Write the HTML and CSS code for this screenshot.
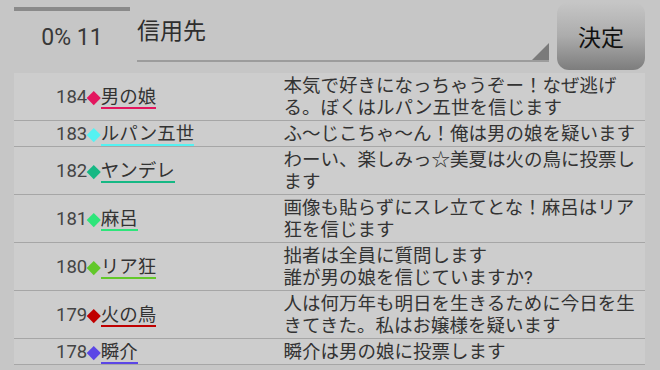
FILE: index.html
```html
<!DOCTYPE HTML>

<html>

<head>
<meta charset="utf-8">
<title>投票</title>

<link rel="stylesheet" href="styles.css">
</head>

<body>
<div id="header">
  <div id="progress">
    <div id="progressBar"></div>
    <div id="progressText">0% 11</div>
  </div>
  <div id="target">
    <span id="targetText">信用先</span>
    <div id="targetArrow"></div>
  </div>
  <button id="decideButton">決定</button>
</div>

<div id="logList">
  <div class="row">
    <div class="who"><span class="num">184</span><span class="mark" style="background:#e3165e"></span><span class="name" style="border-color:#e3165e">男の娘</span></div>
    <div class="msg">本気で好きになっちゃうぞー！なぜ逃げる。ぼくはルパン五世を信じます</div>
  </div>
  <div class="row">
    <div class="who"><span class="num">183</span><span class="mark" style="background:#55f2f2"></span><span class="name" style="border-color:#55f2f2">ルパン五世</span></div>
    <div class="msg">ふ～じこちゃ～ん！俺は男の娘を疑います</div>
  </div>
  <div class="row">
    <div class="who"><span class="num">182</span><span class="mark" style="background:#16b884"></span><span class="name" style="border-color:#16b884">ヤンデレ</span></div>
    <div class="msg">わーい、楽しみっ☆美夏は火の鳥に投票します</div>
  </div>
  <div class="row">
    <div class="who"><span class="num">181</span><span class="mark" style="background:#2ee57a"></span><span class="name" style="border-color:#2ee57a">麻呂</span></div>
    <div class="msg">画像も貼らずにスレ立てとな！麻呂はリア狂を信じます</div>
  </div>
  <div class="row">
    <div class="who"><span class="num">180</span><span class="mark" style="background:#62c82a"></span><span class="name" style="border-color:#62c82a">リア狂</span></div>
    <div class="msg">拙者は全員に質問します<br/>誰が男の娘を信じていますか?</div>
  </div>
  <div class="row">
    <div class="who"><span class="num">179</span><span class="mark" style="background:#c00000"></span><span class="name" style="border-color:#c00000">火の鳥</span></div>
    <div class="msg">人は何万年も明日を生きるために今日を生きてきた。私はお嬢様を疑います</div>
  </div>
  <div class="row">
    <div class="who"><span class="num">178</span><span class="mark" style="background:#5b46e6"></span><span class="name" style="border-color:#5b46e6">瞬介</span></div>
    <div class="msg">瞬介は男の娘に投票します</div>
  </div>
</div>

</body>

</html>
```

FILE: styles.css
```css
body {
  margin: 0;
  background: #c6c6c6;
  color: #333;
  font-family: Roboto, "Noto Sans CJK JP", sans-serif;
  overflow: hidden;
}

#header {
  display: flex;
  height: 73px;
  padding: 0 15px 0 14px;
}

#progress {
  width: 116px;
}

#progressBar {
  margin-top: 7px;
  height: 4px;
  background: #8a8a8a;
}

#progressText {
  text-align: center;
  font-size: 23px;
  line-height: 30px;
  margin-top: 12px;
  color: #383838;
}

#target {
  position: relative;
  flex: 1;
  margin-left: 7px;
  height: 60px;
  border-bottom: 2px solid #9c9c9c;
}

#targetText {
  display: block;
  font-size: 23px;
  line-height: 30px;
  margin-top: 17px;
  color: #2e2e2e;
}

#targetArrow {
  position: absolute;
  right: 0;
  bottom: 0;
  width: 0;
  height: 0;
  border-left: 17px solid transparent;
  border-bottom: 17px solid #7a7a7a;
}

#decideButton {
  width: 88px;
  height: 68px;
  margin: 2px 0 0 8px;
  border: none;
  border-radius: 12px;
  background: linear-gradient(to bottom, #c6c6c6 0%, #acacac 50%, #7d7d7d 100%);
  color: #111;
  font-family: "Noto Sans CJK JP", sans-serif;
  font-size: 23px;
  padding: 0;
}

#logList {
  margin: 0 15px 0 14px;
  background: #cdcdcd;
}

.row {
  display: flex;
  border-bottom: 1px solid #a6a6a6;
}

.who {
  width: 228px;
  padding-left: 42px;
  display: flex;
  align-items: center;
}

.num {
  font-size: 18.5px;
  line-height: 22px;
  color: #444;
  margin-top: 1px;
}

.mark {
  display: inline-block;
  width: 9.5px;
  height: 9.5px;
  margin: 2px 2px 0 2px;
  transform: rotate(45deg);
}

.name {
  font-size: 18.5px;
  line-height: 20px;
  border-bottom: 2px solid;
  margin-top: 2px;
  color: #333;
}

.msg {
  width: 356px;
  padding: 2px 6px 1px 0;
  font-size: 18.5px;
  line-height: 22px;
  color: #333;
}
```
